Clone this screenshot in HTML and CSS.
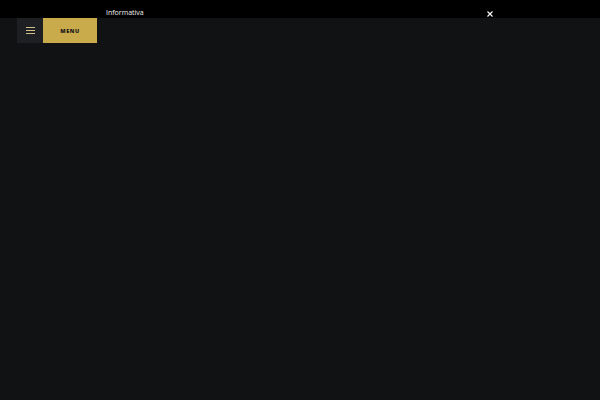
FILE: index.html
```html
<!DOCTYPE html>
<html>
<head>
<meta charset="utf-8">
<link rel="stylesheet" href="styles.css">
</head>
<body>
<div class="notice">
  <span class="notice-text">Informativa</span>
  <svg class="notice-close" width="6" height="6" viewBox="0 0 6 6"><path d="M0.5 0.5 L5.5 5.5 M5.5 0.5 L0.5 5.5" stroke="#fff" stroke-width="1.1"/></svg>
</div>
<div class="nav">
  <div class="burger"><span></span><span></span><span></span></div>
  <div class="menu-btn">MENU</div>
</div>
</body>
</html>
```
FILE: styles.css
```css
html, body { margin: 0; padding: 0; }
body {
  background: #111214;
  width: 600px;
  height: 400px;
  overflow: hidden;
  font-family: "Open Sans", "DejaVu Sans", sans-serif;
}
.notice {
  height: 18px;
  background: #000;
  display: flex;
  align-items: flex-start;
  position: relative;
}
.notice-text {
  color: #f2f2f2;
  font-size: 7px;
  margin-left: 106px;
  margin-top: 8px;
  line-height: 9px;
}
.notice-close {
  position: absolute;
  left: 487px;
  top: 11px;
}
.nav {
  display: flex;
  margin-left: 17px;
  height: 25px;
}
.burger {
  width: 26px;
  background: #1d1f23;
  display: flex;
  flex-direction: column;
  justify-content: center;
  align-items: center;
  gap: 2px;
}
.burger span {
  display: block;
  width: 9px;
  height: 1px;
  background: #d2c08a;
}
.menu-btn {
  width: 54px;
  background: #c9ab4c;
  color: #1a1a1a;
  font-size: 5.5px;
  font-weight: 800;
  letter-spacing: 0.6px;
  display: flex;
  align-items: center;
  justify-content: center;
}
```
